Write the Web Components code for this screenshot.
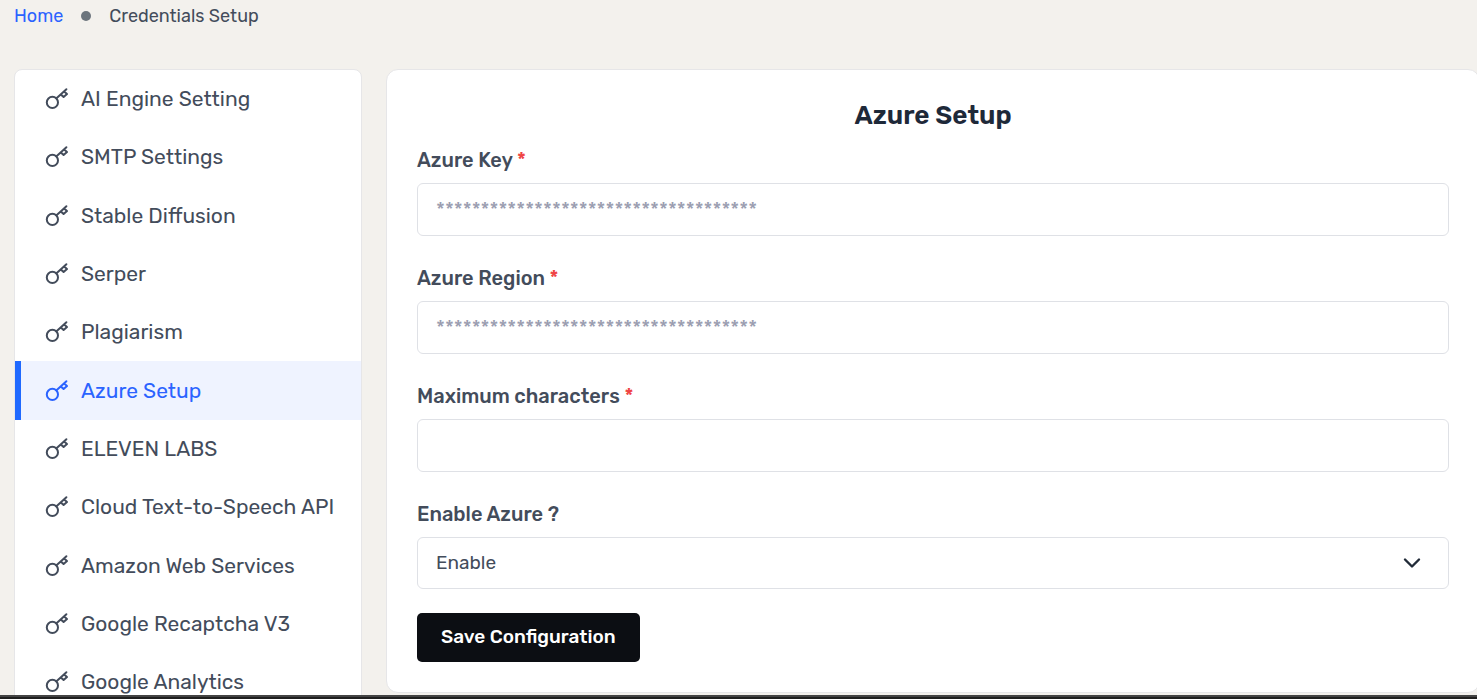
<!DOCTYPE html>
<html lang="en">
<head>
<meta charset="utf-8">
<meta name="viewport" content="width=device-width, initial-scale=1">
<title>Credentials Setup</title>
<style>
  body { margin: 0; background: #f3f1ed; color: #434c5b; font-family: Rubik, Roboto, "Liberation Sans", sans-serif; }
</style>
</head>
<body>
<credentials-page></credentials-page>

<script>
const define = (name, html, setup) => {
  const template = document.createElement('template');
  template.innerHTML = '<style>*{box-sizing:border-box}</style>' + html;
  customElements.define(name, class extends HTMLElement {
    constructor() {
      super();
      this.attachShadow({ mode: 'open' }).append(template.content.cloneNode(true));
    }
    connectedCallback() { if (setup) setup(this, this.shadowRoot); }
  });
};

define('key-icon', `
  <style>
    :host { display: block; width: 24px; height: 24px; flex: none; }
    svg { display: block; fill: none; stroke: currentColor; stroke-width: 2; stroke-linecap: round; stroke-linejoin: round; }
  </style>
  <svg width="24" height="24" viewBox="0 0 24 24" aria-hidden="true">
    <circle cx="7.4" cy="15.4" r="5.6"/>
    <path d="M11.5 11.3 21.4 2.2M19.2 4.6 22 7 18.6 10 15.8 7.4"/>
  </svg>`);

define('bread-crumb', `
  <style>
    :host { display: block; }
    nav { display: flex; align-items: center; gap: 18px; height: 32px; padding-left: 14px; font-size: 18px; line-height: 24px; }
    a { color: #2b63ff; text-decoration: none; }
    i { width: 10px; height: 10px; border-radius: 50%; background: #6c757d; }
  </style>
  <nav aria-label="Breadcrumb"><a href="#home">Home</a><i></i><slot></slot></nav>`);

define('menu-item', `
  <style>
    :host { display: block; height: 58px; }
    :host(:nth-child(3n)) { height: 59px; }
    a { display: flex; align-items: center; gap: 12px; height: 100%; padding-left: 24px; border-left: 6px solid transparent; color: #434c5b; text-decoration: none; font-size: 21px; line-height: 28px; white-space: nowrap; }
    :host([active]) a { color: #2b63ff; background: #eff3ff; border-color: #1f69ff; }
  </style>
  <a href="#settings"><key-icon></key-icon><slot></slot></a>`,
  (host, root) => { if (host.hasAttribute('active')) root.querySelector('a').setAttribute('aria-current', 'page'); });

define('side-menu', `
  <style>
    :host { display: block; background: #fff; border: 1px solid #e6e6e8; border-radius: 8px; overflow: hidden; }
  </style>
  <nav aria-label="Credentials"><slot></slot></nav>`);

define('text-field', `
  <style>
    :host { display: block; }
    label { display: block; margin-bottom: 11px; font-size: 20px; line-height: 24px; font-weight: 500; }
    b { color: #ef4444; font-weight: 500; }
    input { display: block; width: 100%; height: 53px; padding: 0 18px; border: 1px solid #dfe1e6; border-radius: 6px; background: #fff; color: #434c5b; font: inherit; font-size: 20px; }
    input::placeholder { color: #9a9db0; opacity: 1; }
  </style>
  <label for="field"><slot></slot> <b>*</b></label>
  <input id="field" type="text" required>`,
  (host, root) => { root.querySelector('input').placeholder = host.getAttribute('placeholder') || ''; });

define('select-field', `
  <style>
    :host { display: block; }
    label { display: block; margin-bottom: 11px; font-size: 20px; line-height: 24px; font-weight: 500; }
    div { display: grid; align-items: center; }
    select, svg { grid-area: 1 / 1; }
    select { appearance: none; width: 100%; height: 52px; padding: 0 18px 2px; border: 1px solid #dfe1e6; border-radius: 6px; background: #fff; color: #434c5b; font: inherit; font-size: 19px; }
    svg { justify-self: end; margin-right: 28px; fill: none; stroke: #212b38; stroke-width: 2.4; stroke-linecap: round; stroke-linejoin: round; pointer-events: none; }
  </style>
  <label for="field"><slot></slot></label>
  <div>
    <select id="field"><option>Enable</option><option>Disable</option></select>
    <svg width="18" height="12" viewBox="0 0 18 12" aria-hidden="true"><path d="M2 2.5 9 9.5 16 2.5"/></svg>
  </div>`);

define('save-button', `
  <style>
    :host { display: block; }
    button { height: 49px; padding: 0 24px 2px; border: 0; border-radius: 5px; background: #0c0e13; color: #fff; font: inherit; font-size: 19px; font-weight: 500; }
  </style>
  <button type="button"><slot></slot></button>`);

define('setup-panel', `
  <style>
    :host { display: block; background: #fff; border: 1px solid #e6e6e8; border-radius: 12px; padding: 30px; }
    h1 { margin: 0 0 16px; font-size: 26px; line-height: 32px; font-weight: 600; text-align: center; color: #1e2939; }
    form { display: grid; gap: 30px; }
    save-button { margin-top: -6px; }
  </style>
  <h1>Azure Setup</h1>
  <form>
    <text-field placeholder="************************************">Azure Key</text-field>
    <text-field placeholder="************************************">Azure Region</text-field>
    <text-field>Maximum characters</text-field>
    <select-field>Enable Azure ?</select-field>
    <save-button>Save Configuration</save-button>
  </form>`);

define('credentials-page', `
  <style>
    :host { display: flex; flex-direction: column; height: 100vh; overflow: hidden; }
    main { flex: 1; min-height: 0; overflow: hidden; }
    .columns { display: grid; grid-template-columns: 348px minmax(0, 1fr); gap: 24px; align-items: start; margin: 37px -3px 0 14px; }
    footer { flex: none; height: 4px; background: #1f1f1f; border-top: 2px solid #444; }
  </style>
  <main>
    <bread-crumb>Credentials Setup</bread-crumb>
    <div class="columns">
      <side-menu>
        <menu-item>AI Engine Setting</menu-item>
        <menu-item>SMTP Settings</menu-item>
        <menu-item>Stable Diffusion</menu-item>
        <menu-item>Serper</menu-item>
        <menu-item>Plagiarism</menu-item>
        <menu-item active>Azure Setup</menu-item>
        <menu-item>ELEVEN LABS</menu-item>
        <menu-item>Cloud Text-to-Speech API</menu-item>
        <menu-item>Amazon Web Services</menu-item>
        <menu-item>Google Recaptcha V3</menu-item>
        <menu-item>Google Analytics</menu-item>
      </side-menu>
      <setup-panel></setup-panel>
    </div>
  </main>
  <footer></footer>`);
</script>
</body>
</html>
